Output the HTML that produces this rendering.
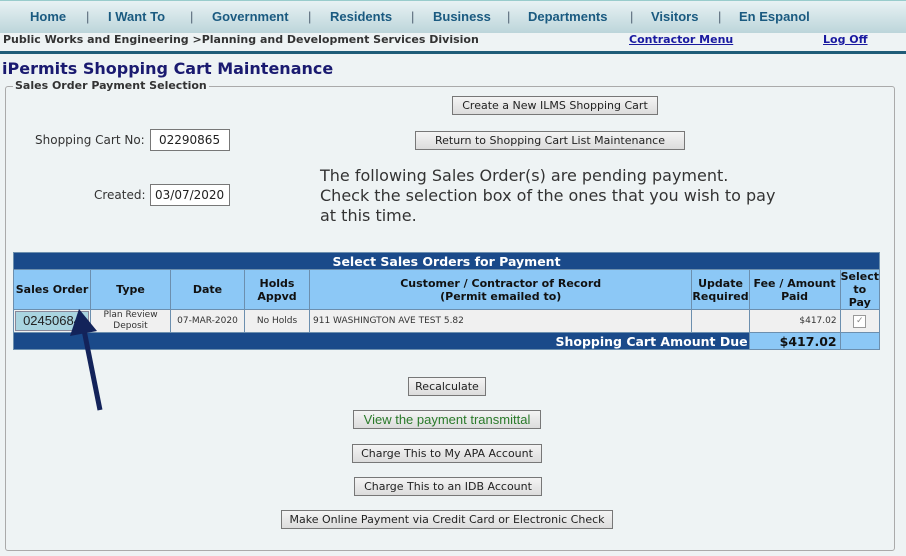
<!DOCTYPE html>
<html><head><meta charset="utf-8"><style>
body{margin:0;width:906px;height:556px;background:#eef3f4;font-family:"DejaVu Sans","Liberation Sans",sans-serif;position:relative;overflow:hidden}
.a{position:absolute;white-space:nowrap}
.nav{left:0;top:0;width:906px;height:32px;background:linear-gradient(#e8f2f4,#bcd5da);border-top:1px solid #9cc}
.nav span{position:absolute;top:8px;font-size:13px;color:#1a5a80;font-family:"Liberation Sans",sans-serif;font-weight:bold}
.btn{position:absolute;background:linear-gradient(#f4f4f4,#dcdcdc);border:1px solid #777;font-size:11px;color:#222;text-align:center;line-height:17px;height:17px}
table{border-collapse:collapse;position:absolute;left:13px;top:252px;width:867px;font-size:11px}
td{border:1px solid #6c8fae;padding:0;text-align:center}
.h td{background:#8cc8f6;font-weight:bold;color:#111;font-size:11px;line-height:13px}
</style></head><body>
<div class="a nav">
<span style="left:30px">Home</span><span style="left:86px;color:#567;font-weight:normal">|</span>
<span style="left:108px">I Want To</span><span style="left:190px;color:#567;font-weight:normal">|</span>
<span style="left:212px">Government</span><span style="left:308px;color:#567;font-weight:normal">|</span>
<span style="left:330px">Residents</span><span style="left:411px;color:#567;font-weight:normal">|</span>
<span style="left:433px">Business</span><span style="left:507px;color:#567;font-weight:normal">|</span>
<span style="left:528px">Departments</span><span style="left:630px;color:#567;font-weight:normal">|</span>
<span style="left:651px">Visitors</span><span style="left:718px;color:#567;font-weight:normal">|</span>
<span style="left:739px">En Espanol</span>
</div>
<div class="a" style="left:0;top:33px;width:906px;height:18px;border-bottom:3px solid #1f5c78"></div>
<div class="a" style="left:3px;top:33px;font-size:11px;font-weight:bold;color:#333">Public Works and Engineering &gt;Planning and Development Services Division</div>
<div class="a" style="left:629px;top:33px;font-size:11px;font-weight:bold;color:#1a1aa0;text-decoration:underline">Contractor Menu</div>
<div class="a" style="left:823px;top:33px;font-size:11px;font-weight:bold;color:#1a1aa0;text-decoration:underline">Log Off</div>
<div class="a" style="left:2px;top:59px;font-size:16px;font-weight:bold;color:#1a1a70">iPermits Shopping Cart Maintenance</div>
<div class="a" style="left:5px;top:86px;width:888px;height:463px;border:1px solid #aaa;border-radius:3px"></div>
<div class="a" style="left:13px;top:79px;font-size:11px;font-weight:bold;color:#333;background:#eef3f4;padding:0 2px">Sales Order Payment Selection</div>
<div class="btn" style="left:452px;top:96px;width:204px">Create a New ILMS Shopping Cart</div>
<div class="btn" style="left:415px;top:131px;width:268px">Return to Shopping Cart List Maintenance</div>
<div class="a" style="left:35px;top:133px;font-size:12px;color:#333">Shopping Cart No:</div>
<div class="a" style="left:150px;top:129px;width:78px;height:20px;border:1px solid #777;background:#fff;font-size:12px;line-height:20px;text-indent:8px;color:#222">02290865</div>
<div class="a" style="left:94px;top:188px;font-size:12px;color:#333">Created:</div>
<div class="a" style="left:150px;top:184px;width:78px;height:20px;border:1px solid #777;background:#fff;font-size:12px;line-height:20px;text-indent:4px;color:#222">03/07/2020</div>
<div class="a" style="left:320px;top:166px;font-size:16px;line-height:20px;color:#333">The following Sales Order(s) are pending payment.<br>Check the selection box of the ones that you wish to pay<br>at this time.</div>
<table>
<tr><td colspan="8" style="background:#1a4a8a;color:#fff;font-weight:bold;font-size:12.5px;height:16px">Select Sales Orders for Payment</td></tr>
<tr class="h" style="height:40px"><td style="width:76px">Sales Order</td><td style="width:79px">Type</td><td style="width:73px">Date</td><td style="width:64px">Holds<br>Appvd</td><td>Customer / Contractor of Record<br>(Permit emailed to)</td><td style="width:56px">Update<br>Required</td><td style="width:90px">Fee / Amount<br>Paid</td><td style="width:37px">Select<br>to<br>Pay</td></tr>
<tr style="height:23px;background:#f0f0f0;color:#333;font-size:9px"><td style="background:#f0f0f0"><div style="margin:1px;background:#a9d4e0;border:1px solid #889;font-family:'Liberation Sans',sans-serif;font-size:13px;line-height:18px;color:#222">02450684</div></td><td style="line-height:11px">Plan Review<br>Deposit</td><td>07-MAR-2020</td><td>No Holds</td><td style="text-align:left;padding-left:3px">911 WASHINGTON AVE TEST 5.82</td><td></td><td style="text-align:right;padding-right:3px">$417.02</td><td><span style="display:inline-block;width:11px;height:11px;border:1px solid #999;background:#fff;font-size:9px;line-height:11px;color:#888">✓</span></td></tr>
<tr style="height:17px;font-weight:bold;font-size:12.5px"><td colspan="6" style="background:#1a4a8a;color:#fff;text-align:right;padding-right:1px">Shopping Cart Amount Due</td><td style="background:#8cc8f6;text-align:right;padding-right:3px;color:#111">$417.02</td><td style="background:#8cc8f6"></td></tr>
</table>
<svg class="a" style="left:70px;top:305px" width="40" height="110"><line x1="30" y1="105" x2="14" y2="25" stroke="#13235a" stroke-width="5"/><polygon points="9,4 0,31 27,26" fill="#13235a"/></svg>
<div class="btn" style="left:408px;top:377px;width:76px">Recalculate</div>
<div class="btn" style="left:353px;top:410px;width:186px;font-family:'Liberation Sans',sans-serif;font-size:13px;color:#2a7a2a">View the payment transmittal</div>
<div class="btn" style="left:352px;top:444px;width:188px">Charge This to My APA Account</div>
<div class="btn" style="left:354px;top:477px;width:186px">Charge This to an IDB Account</div>
<div class="btn" style="left:281px;top:510px;width:330px">Make Online Payment via Credit Card or Electronic Check</div>
</body></html>
